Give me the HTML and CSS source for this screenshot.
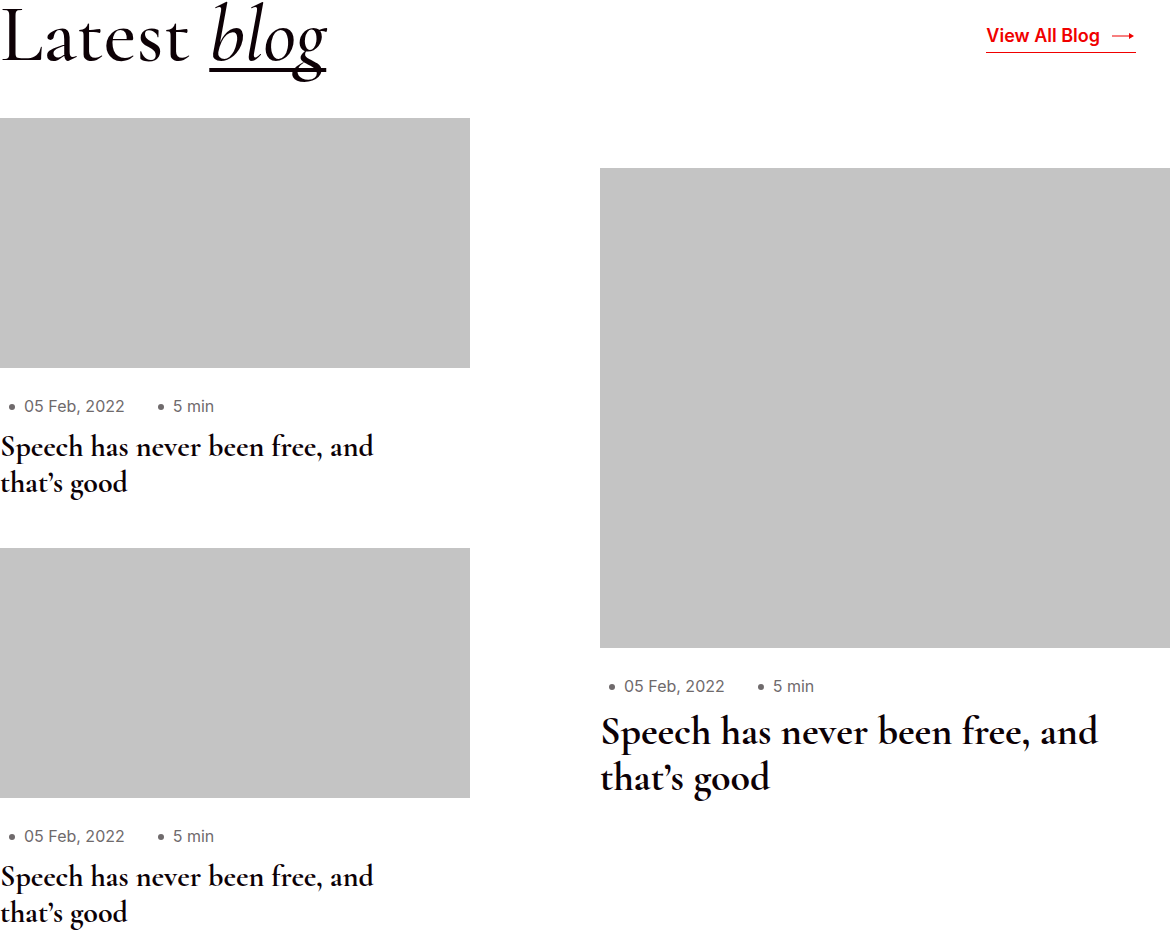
FILE: index.html
```html
<!DOCTYPE html>
<html lang="en">
<head>
<meta charset="utf-8">
<title>Latest blog</title>
<link rel="stylesheet" href="styles.css">
</head>
<body>
<section class="blog">
  <header class="blog-header">
    <h1 class="blog-title">Latest <em class="accent">blog</em></h1>
    <a class="view-all" href="#">View All Blog
      <svg class="arrow" viewBox="0 0 22 8" aria-hidden="true"><path d="M0 3.5h18v1H0zM17 1l5 3-5 3z" fill="currentColor"/></svg>
    </a>
  </header>
  <div class="blog-grid">
    <div class="column">
      <article class="card">
        <div class="thumb"></div>
        <ul class="meta"><li>05 Feb, 2022</li><li>5 min</li></ul>
        <h2 class="card-title">Speech has never been free, and<br>that’s good</h2>
      </article>
      <article class="card">
        <div class="thumb"></div>
        <ul class="meta"><li>05 Feb, 2022</li><li>5 min</li></ul>
        <h2 class="card-title">Speech has never been free, and<br>that’s good</h2>
      </article>
    </div>
    <article class="card card-large">
      <div class="thumb"></div>
      <ul class="meta"><li>05 Feb, 2022</li><li>5 min</li></ul>
      <h2 class="card-title">Speech has never been free, and<br>that’s good</h2>
    </article>
  </div>
</section>
</body>
</html>
```
FILE: styles.css
```css
* { box-sizing: border-box; }
body { margin: 0; background: #fff; color: #0d0106; font-family: Inter, "Liberation Sans", sans-serif; }
.blog-header { display: flex; justify-content: space-between; align-items: flex-start; padding-right: 34px; padding-bottom: 48px; }
.blog-title { margin: 0; font: 500 80px/70px "Cormorant Garamond", Cormorant, "Liberation Serif", serif; }
.accent { text-decoration: underline; text-decoration-thickness: 4px; text-underline-offset: 8px; text-decoration-skip-ink: none; }
.view-all { display: flex; align-items: center; gap: 12px; margin-top: 20px; padding-bottom: 1px; border-bottom: 1px solid #f00000; color: #f00000; font-size: 18px; font-weight: 600; line-height: 31px; text-decoration: none; }
.arrow { width: 22px; height: 8px; margin-right: 2px; }
.blog-grid { display: grid; grid-template-columns: 47fr 57fr; column-gap: 130px; align-items: start; }
.column { display: grid; row-gap: 47px; }
.thumb { height: 250px; background: #c4c4c4; }
.card-large { padding-top: 50px; }
.card-large .thumb { height: 480px; }
.meta { display: flex; gap: 33px; margin: 25px 0 10px; padding: 0 0 0 9px; list-style: none; color: #6f6a6c; font-size: 16px; line-height: 26px; }
.meta li { display: flex; align-items: center; gap: 9px; }
.meta li::before { content: ""; width: 6px; height: 6px; margin-top: 2px; border-radius: 50%; background: currentColor; }
.card-title { margin: 0; font: 700 30px/36px "Cormorant Garamond", Cormorant, "Liberation Serif", serif; }
.card-large .meta { margin-bottom: 9px; }
.card-large .card-title { font-size: 40px; line-height: 46px; }
```
